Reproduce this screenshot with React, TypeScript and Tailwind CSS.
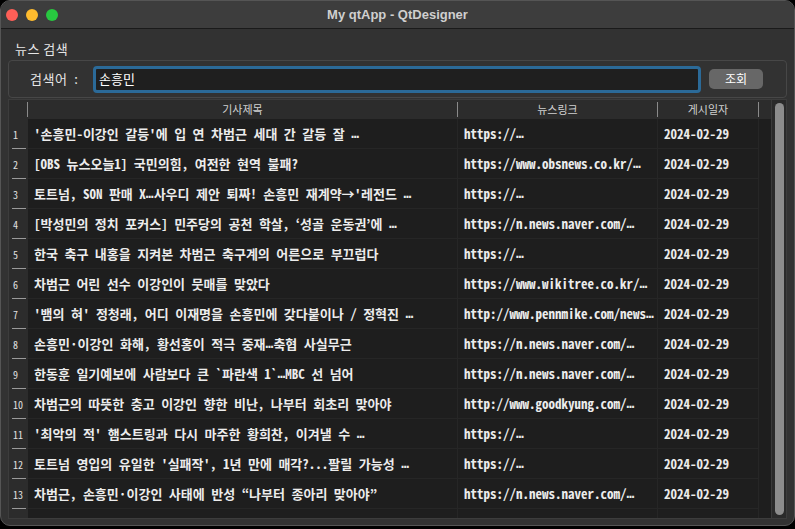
import React from "react";

type Row = {title: string; link: string; date: string};

const rows: Row[] = [
 {title: "'손흥민-이강인 갈등'에 입 연 차범근 세대 간 갈등 잘 …", link: "https://…", date: "2024-02-29"},
 {title: "[OBS 뉴스오늘1] 국민의힘, 여전한 현역 불패?", link: "https://www.obsnews.co.kr/…", date: "2024-02-29"},
 {title: "토트넘, SON 판매 X…사우디 제안 퇴짜! 손흥민 재계약→'레전드 …", link: "https://…", date: "2024-02-29"},
 {title: "[박성민의 정치 포커스] 민주당의 공천 학살, ‘성골 운동권’에 …", link: "https://n.news.naver.com/…", date: "2024-02-29"},
 {title: "한국 축구 내홍을 지켜본 차범근 축구계의 어른으로 부끄럽다", link: "https://…", date: "2024-02-29"},
 {title: "차범근 어린 선수 이강인이 뭇매를 맞았다", link: "https://www.wikitree.co.kr/…", date: "2024-02-29"},
 {title: "'뱀의 혀' 정청래, 어디 이재명을 손흥민에 갖다붙이나 / 정혁진 …", link: "http://www.pennmike.com/news…", date: "2024-02-29"},
 {title: "손흥민·이강인 화해, 황선홍이 적극 중재…축협 사실무근", link: "https://n.news.naver.com/…", date: "2024-02-29"},
 {title: "한동훈 일기예보에 사람보다 큰 `파란색 1`…MBC 선 넘어", link: "https://n.news.naver.com/…", date: "2024-02-29"},
 {title: "차범근의 따뜻한 충고 이강인 향한 비난, 나부터 회초리 맞아야", link: "http://www.goodkyung.com/…", date: "2024-02-29"},
 {title: "'최악의 적' 햄스트링과 다시 마주한 황희찬, 이겨낼 수 …", link: "https://…", date: "2024-02-29"},
 {title: "토트넘 영입의 유일한 '실패작', 1년 만에 매각?...팔릴 가능성 …", link: "https://…", date: "2024-02-29"},
 {title: "차범근, 손흥민·이강인 사태에 반성 “나부터 종아리 맞아야”", link: "https://n.news.naver.com/…", date: "2024-02-29"},
 {title: "이천수, 황선홍호 합류한 정몽규의 발언에 쓴소리 \"축구협회 …", link: "https://…", date: "2024-02-29"},
];

const mono = "font-['Noto_Sans_Mono_CJK_KR','DejaVu_Sans_Mono','Noto_Sans_CJK_KR',monospace]";
const sans = "font-['Noto_Sans_CJK_KR','Liberation_Sans',sans-serif]";

// the CJK mono font centres "…", Qt draws it on the baseline
const Elided = ({text}: {text: string}) => {
 const parts = text.split("…");
 return (
  <>
   {parts.map((p, i) => (
    <React.Fragment key={i}>
     {p}
     {i < parts.length - 1 && <span className="font-['DejaVu_Sans_Mono',monospace]">…</span>}
    </React.Fragment>
   ))}
  </>
 );
};

const App = () => {
 return (
  <div className="w-[795px] h-[529px] bg-black overflow-hidden">
   <div className="w-[795px] h-[526px] rounded-[10px] bg-[#323232] border border-[#555] overflow-hidden flex flex-col">
    {/* title bar */}
    <div className="h-[28px] shrink-0 bg-[#3d3d3d] border-b border-[#1a1a1a] flex items-center relative">
     <div className="flex gap-[8px] pl-[5px]">
      <span className="w-[12px] h-[12px] rounded-full bg-[#fe5f57]" />
      <span className="w-[12px] h-[12px] rounded-full bg-[#febc2e]" />
      <span className="w-[12px] h-[12px] rounded-full bg-[#28c840]" />
     </div>
     <div className="absolute inset-0 flex items-center justify-center text-[13px] font-bold text-[#cfcfcf] font-['Liberation_Sans',sans-serif]">
      My qtApp - QtDesigner
     </div>
    </div>

    <div className={`pl-[14px] pt-[10px] h-[31px] text-[13px] tracking-[0.5px] text-[#e6e6e6] ${sans}`}>뉴스 검색</div>

    {/* search group */}
    <div className="mx-[7px] h-[38px] border border-[#474747] rounded-[4px] flex items-center">
     <div className={`w-[84px] pl-[21px] text-[13px] tracking-[0.5px] text-[#e6e6e6] whitespace-pre ${sans}`}>검색어  :</div>
     <div className="w-[608px] h-[27px] border-[3px] border-[#2b6a98] rounded-[4px] bg-[#1f1f1f] flex items-center pl-[3px]">
      <span className={`text-[13px] text-white ${sans}`}>손흥민</span>
     </div>
     <div className={`ml-[8px] w-[54px] h-[20px] rounded-[5px] bg-[#676767] flex items-center justify-center text-[12px] text-white ${sans}`}>
      조회
     </div>
    </div>

    {/* table */}
    <div className="mx-[7px] mt-[1px] h-[420px] border border-[#3c3c3c] flex overflow-hidden">
     <div className="flex-1 flex flex-col bg-[#1e1e1e]">
      <div className={`h-[19px] shrink-0 bg-[#2c2c2c] flex items-center text-[11px] text-[#d0d0d0] ${sans}`}>
       <div className="w-[19px] h-[15px] border-r border-[#8a8a8a]" />
       <div className="w-[430px] h-[15px] border-r border-[#8a8a8a] flex items-center justify-center">기사제목</div>
       <div className="w-[200px] h-[15px] border-r border-[#8a8a8a] flex items-center justify-center">뉴스링크</div>
       <div className="w-[101px] h-[15px] border-r border-[#8a8a8a] flex items-center justify-center">게시일자</div>
      </div>
      {rows.map((row, i) => (
       <div key={i} className={`h-[30px] shrink-0 flex text-[13px] font-semibold text-[#ececec] ${mono}`}>
        <div className="w-[19px] bg-[#2c2c2c] relative flex items-center pl-[4px] text-[10px] text-[#e0e0e0] font-normal">
         {i + 1}
         <span className="absolute left-[3px] right-[2px] bottom-0 h-px bg-[#9a9a9a]" />
        </div>
        <div className="w-[430px] pl-[6px] flex items-center whitespace-pre overflow-hidden border-r border-b border-[#262626]">
         <Elided text={row.title} />
        </div>
        <div className="w-[200px] pl-[6px] flex items-center whitespace-pre overflow-hidden border-r border-b border-[#262626]">
         <Elided text={row.link} />
        </div>
        <div className="w-[101px] pl-[6px] flex items-center whitespace-pre overflow-hidden border-r border-b border-[#262626]">
         {row.date}
        </div>
       </div>
      ))}
     </div>
     {/* scrollbar */}
     <div className="w-[15px] bg-[#2a2a2a] border-l border-[#3a3a3a] pt-[3px] pb-[3px] flex justify-center">
      <div className="w-[9px] h-full rounded-full bg-[#8c8c8c]" />
     </div>
    </div>
   </div>
  </div>
 );
};

export default App;
